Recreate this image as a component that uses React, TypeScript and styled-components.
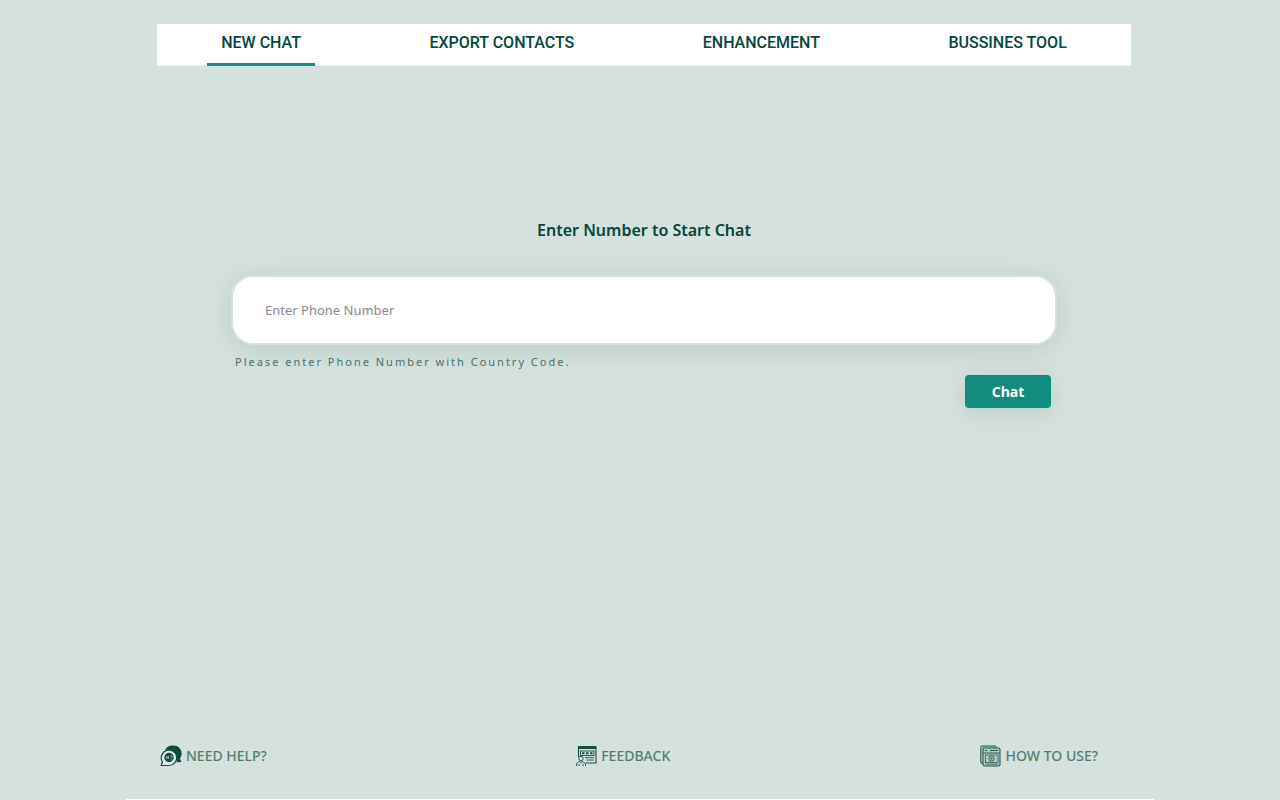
import React from "react";
import styled, { createGlobalStyle } from "styled-components";

const ink = "#07463d";
const teal = "#128c7e";
const pale = "#d4e1dc";

const GlobalStyle = createGlobalStyle`
  *, *::before, *::after { box-sizing: border-box; }
  body {
    margin: 0;
    background: ${pale};
    color: ${ink};
    font-family: "Noto Sans", "Open Sans", sans-serif;
  }
`;

const Page = styled.div`
  display: flex;
  flex-direction: column;
  max-width: 1028px;
  min-height: 100vh;
  margin: 0 auto;
  padding: 24px 23px 31px 31px;
  border-bottom: 1px solid #fff;
`;

const TabBar = styled.nav`
  display: flex;
  justify-content: space-around;
  height: 42px;
  background: #fff;
  border-bottom: 1px solid #eef2f1;
`;

const Tab = styled.button<{ $active?: boolean }>`
  height: 42px;
  padding: 0 14px 2px;
  border: 0;
  border-bottom: 3px solid ${(p) => (p.$active ? teal : "transparent")};
  background: none;
  color: ${ink};
  font: 500 16px/36px Roboto, sans-serif;
  cursor: pointer;
`;

const Form = styled.form`
  display: flex;
  flex-direction: column;
  flex: 1;
  padding: 152px 74px 0;
`;

const Title = styled.h1`
  margin: 0 0 33px;
  text-align: center;
  font-size: 16px;
  font-weight: 600;
  line-height: 24px;
`;

const NumberInput = styled.input`
  width: 100%;
  height: 70px;
  padding: 0 32px;
  border: 2px solid ${pale};
  border-radius: 22px;
  background: #fff;
  color: ${ink};
  font: 400 13px/20px "Noto Sans", "Open Sans", sans-serif;
  box-shadow: 0 4px 28px rgba(0, 40, 30, 0.1);
  outline: none;
  &::placeholder { color: #8a8a8a; opacity: 1; }
`;

const Hint = styled.label`
  margin: 8px 0 0 4px;
  color: #46736a;
  font-size: 11px;
  line-height: 18px;
  letter-spacing: 2px;
`;

const ChatButton = styled.button`
  align-self: flex-end;
  width: 86px;
  height: 33px;
  margin: 4px 6px 0 0;
  border: 0;
  border-radius: 4px;
  background: ${teal};
  color: #fff;
  font: 700 14px/20px "Noto Sans", "Open Sans", sans-serif;
  box-shadow: 0 4px 24px rgba(0, 40, 30, 0.1);
  cursor: pointer;
`;

const Footer = styled.footer`
  display: flex;
  justify-content: space-between;
  padding: 0 33px 0 3px;
`;

const FooterLink = styled.a<{ $gap?: number }>`
  display: flex;
  align-items: center;
  gap: ${(p) => p.$gap ?? 4}px;
  color: #557d72;
  font-size: 14px;
  font-weight: 500;
  line-height: 24px;
  text-decoration: none;
  svg { flex: none; }
`;

const HelpIcon = () => (
  <svg width="22" height="22" viewBox="0 0 22 22" fill="none" aria-hidden="true">
    <path d="M5 5A8.6 8 0 0 1 13 .6c5 0 8.600 3.400 8.600 8 0 2-.7 3.700-1.700 5l1.700 3.400-5 .2C19 10 13 3.500 5 5Z" fill="#0d4a40" />
    <path d="M1.200 20.500 2.500 17A7.700 7.700 0 1 1 9 20.500Z" fill="#e0eae7" stroke="#0d4a40" strokeWidth="1.200" />
    <circle cx="9" cy="12.500" r="4.700" fill="#0d4a40" />
    <path d="M6.500 14v-3l2 3v-3M10 11h2v1.500l-1 1M11 14.800h1" stroke="#a9c2ba" strokeWidth=".8" />
  </svg>
);

const FeedbackIcon = () => (
  <svg width="21" height="22" viewBox="0 0 21 22" fill="none" stroke="#174f45" aria-hidden="true">
    <path d="M2.500 12V1.500h17.500v16.500H10" strokeWidth="1.100" />
    <path d="M2 1h18v3H2Z" fill="#174f45" stroke="none" />
    <rect x="4.500" y="6" width="13.500" height="4.500" strokeWidth=".9" />
    <path d="M6 8.200h2.500M10 8.200h2.500M14 8.200h2.500" strokeWidth="2" />
    <path d="M9 12.600h9M10.500 15h7.500" strokeWidth=".9" />
    <circle cx="5" cy="13.500" r="2.200" strokeWidth=".9" />
    <path d="M.6 21v-2.500l3-2.200L5 18l1.500-1.700 3 2.200V21M3 19v2M7 19v2" strokeWidth=".9" />
  </svg>
);

const GuideIcon = () => (
  <svg width="21" height="22" viewBox="0 0 21 22" fill="none" stroke="#285f53" aria-hidden="true">
    <path d="M3.500 18.500H2q-1.300 0-1.300-1.300V2.500Q.7 1 2 1h13q1.500 0 1.500 1.500" fill="#a3bfb6" strokeWidth="1" />
    <rect x="3" y="3" width="17" height="18" rx="1.500" fill="#b4cac3" strokeWidth="1.100" />
    <path d="M3 8h17M10 5.500h8M5 5.500h2" strokeWidth="1" />
    <rect x="5.500" y="10" width="12.500" height="7.500" strokeWidth=".8" />
    <circle cx="11.500" cy="13.500" r="2.700" strokeWidth="1" />
    <path d="m10.700 12 2.300 1.400-2.300 1.400Z" fill="#285f53" stroke="none" />
    <path d="M5.500 19.200h12.500" strokeWidth=".8" />
  </svg>
);

const tabs = ["NEW CHAT", "EXPORT CONTACTS", "ENHANCEMENT", "BUSSINES TOOL"];

export default function App() {
  const [active, setActive] = React.useState(tabs[0]);
  return (
    <>
      <GlobalStyle />
      <Page>
        <TabBar>
          {tabs.map((t) => (
            <Tab key={t} type="button" $active={t === active} onClick={() => setActive(t)}>
              {t}
            </Tab>
          ))}
        </TabBar>
        <Form onSubmit={(e) => e.preventDefault()}>
          <Title>Enter Number to Start Chat</Title>
          <NumberInput id="phone" type="tel" placeholder="Enter Phone Number" />
          <Hint htmlFor="phone">Please enter Phone Number with Country Code.</Hint>
          <ChatButton type="submit">Chat</ChatButton>
        </Form>
        <Footer>
          <FooterLink href="#help"><HelpIcon />NEED HELP?</FooterLink>
          <FooterLink href="#feedback"><FeedbackIcon />FEEDBACK</FooterLink>
          <FooterLink href="#guide" $gap={5}><GuideIcon />HOW TO USE?</FooterLink>
        </Footer>
      </Page>
    </>
  );
}
